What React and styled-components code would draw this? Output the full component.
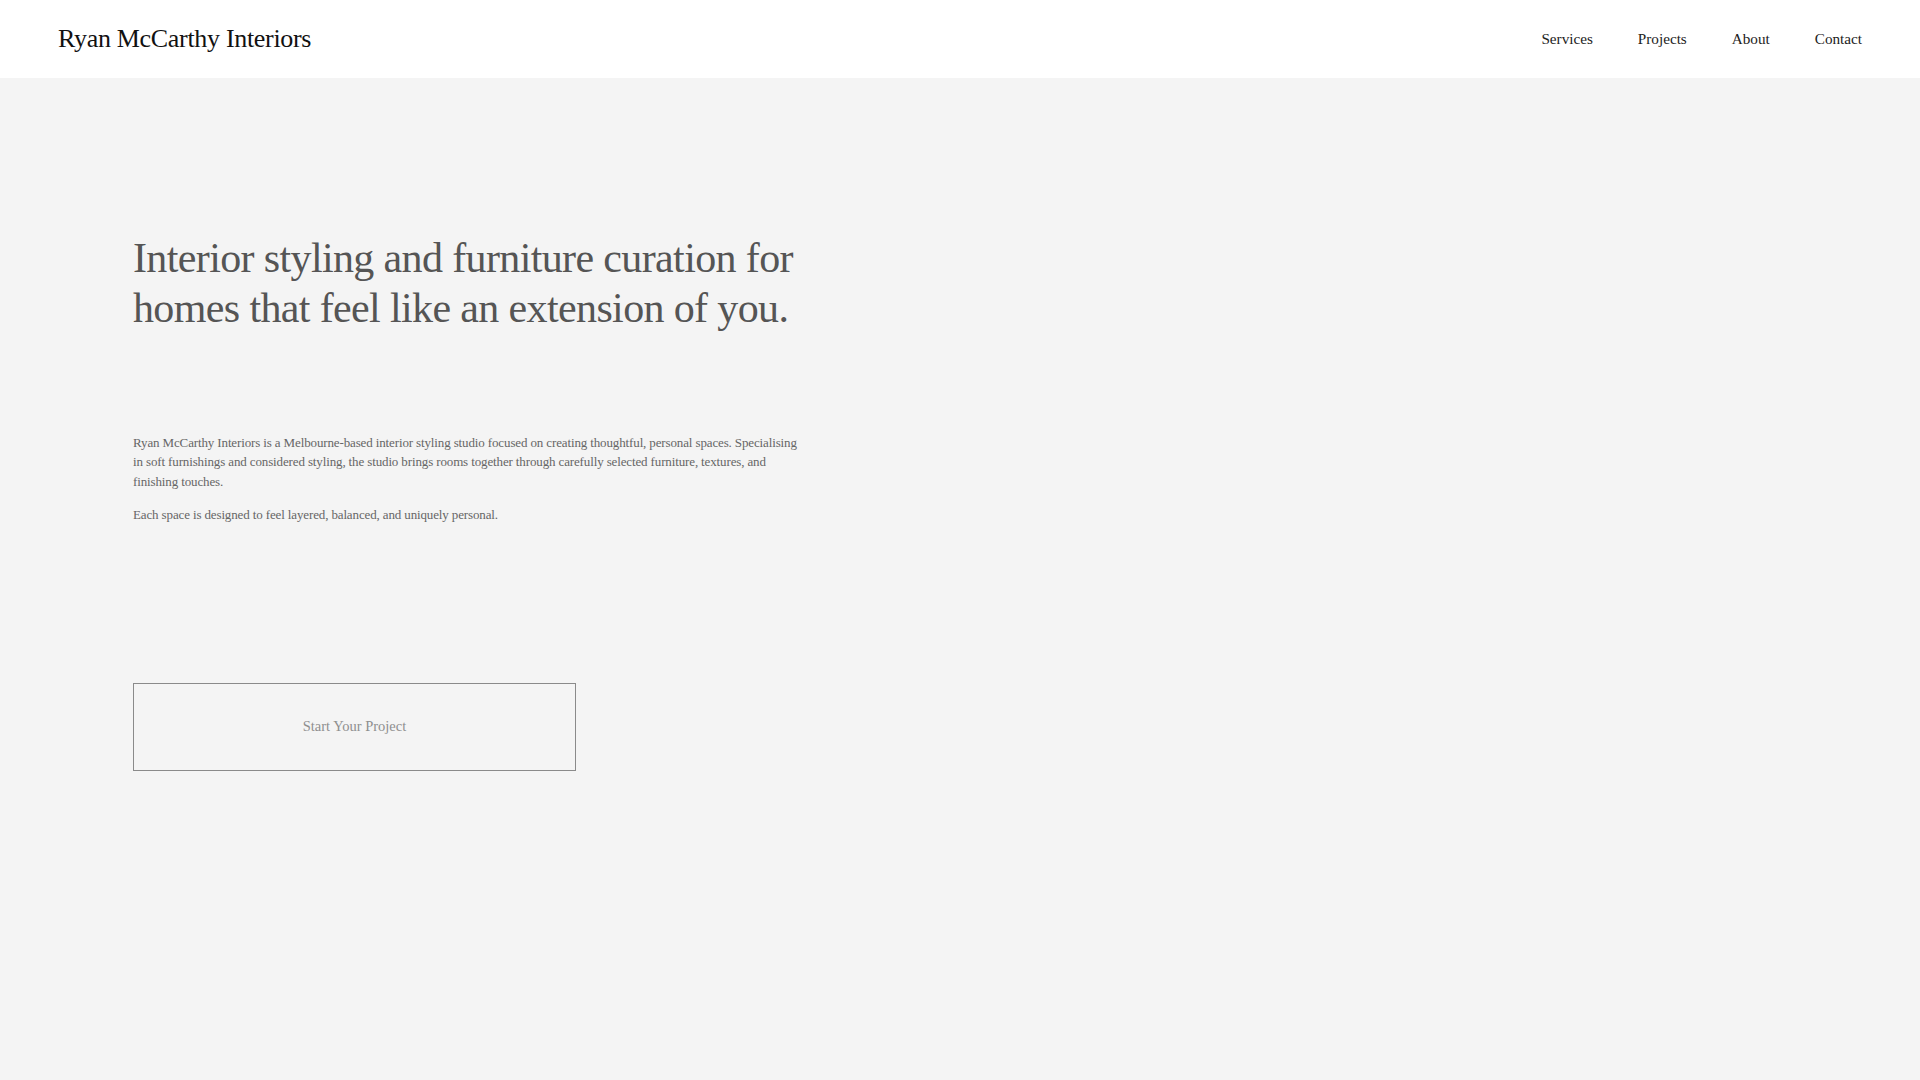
import styled, { createGlobalStyle } from 'styled-components';

const GlobalStyle = createGlobalStyle`
  * {
    box-sizing: border-box;
  }

  html,
  body {
    margin: 0;
    padding: 0;
    background: #f4f4f4;
    font-family: 'Liberation Serif', 'Times New Roman', serif;
  }

  #root {
    min-height: 100vh;
  }
`;

const Page = styled.div`
  min-height: 100vh;
  background: #f4f4f4;
`;

const Header = styled.header`
  height: 78px;
  padding: 0 58px;
  background: #ffffff;
  display: flex;
  align-items: center;
  justify-content: space-between;
`;

const Logo = styled.a`
  font-size: 26px;
  letter-spacing: -0.012em;
  color: #111111;
  text-decoration: none;
`;

const Nav = styled.nav`
  display: flex;
  gap: 45px;

  a {
    font-size: 15.2px;
    color: #222222;
    text-decoration: none;
  }
`;

const Hero = styled.main`
  padding: 155px 0 0 133px;
`;

const Content = styled.div`
  max-width: 675px;
`;

const Heading = styled.h1`
  margin: 0 0 99px;
  font-size: 42px;
  font-weight: 400;
  line-height: 1.2;
  letter-spacing: -0.015em;
  color: #555555;
`;

const Text = styled.p`
  margin: 0 0 14px;
  font-size: 13px;
  line-height: 1.5;
  letter-spacing: -0.01em;
  color: #666666;
`;

const CtaButton = styled.button`
  margin-top: 144px;
  width: 443px;
  height: 88px;
  background: transparent;
  border: 1px solid #8a8a8a;
  font-family: inherit;
  font-size: 14.5px;
  color: #8f8f8f;
  cursor: pointer;
`;

export default function App() {
  return (
    <>
      <GlobalStyle />
      <Page>
        <Header>
          <Logo href="#">Ryan McCarthy Interiors</Logo>
          <Nav>
            <a href="#">Services</a>
            <a href="#">Projects</a>
            <a href="#">About</a>
            <a href="#">Contact</a>
          </Nav>
        </Header>
        <Hero>
          <Content>
            <Heading>
              Interior styling and furniture curation for homes that feel like
              an extension of you.
            </Heading>
            <Text>
              Ryan McCarthy Interiors is a Melbourne-based interior styling
              studio focused on creating thoughtful, personal spaces.
              Specialising in soft furnishings and considered styling, the
              studio brings rooms together through carefully selected
              furniture, textures, and finishing touches.
            </Text>
            <Text>
              Each space is designed to feel layered, balanced, and uniquely
              personal.
            </Text>
            <CtaButton>Start Your Project</CtaButton>
          </Content>
        </Hero>
      </Page>
    </>
  );
}
